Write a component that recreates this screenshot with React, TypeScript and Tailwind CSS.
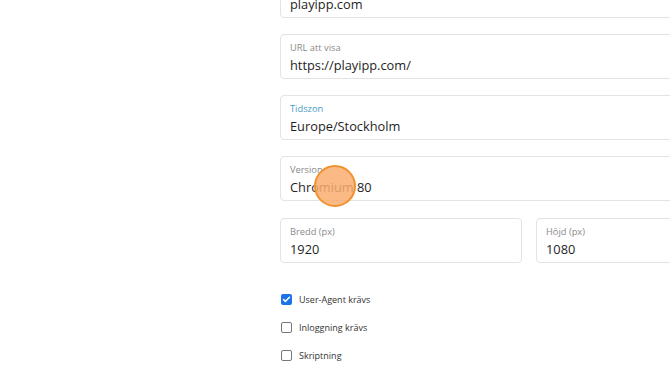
import { Check } from "lucide-react";

const fields = [
  { label: "", value: "playipp.com" },
  { label: "URL att visa", value: "https://playipp.com/" },
  { label: "Tidszon", value: "Europe/Stockholm", focused: true },
  { label: "Version", value: "Chromium 80" },
];

const checks = [
  { label: "User-Agent krävs", checked: true },
  { label: "Inloggning krävs", checked: false },
  { label: "Skriptning", checked: false },
];

function Field({ label, value, focused, className = "" }: { label: string; value: string; focused?: boolean; className?: string }) {
  return (
    <div className={`rounded-[4px] border border-[#e3e3e3] bg-white px-[9px] pt-[6px] pb-[3px] ${className}`}>
      <div className={`text-[9.3px] leading-[14px] ${focused ? "text-[#4b9cc7]" : "text-[#8a8a8a]"}`}>{label || "\u00a0"}</div>
      <div className="text-[12.8px] leading-[20px] text-[#1e1e1e]">{value}</div>
    </div>
  );
}

export default function App() {
  return (
    <div className="relative h-[373px] w-[670px] overflow-hidden bg-white" style={{ fontFamily: '"Open Sans", sans-serif' }}>
      <div className="-mt-[27px] flex w-[440px] flex-col gap-[16px] pl-[280px] box-content">
        {fields.map((f) => (
          <Field key={f.value} label={f.label} value={f.value} focused={f.focused} className="w-[440px]" />
        ))}
        <div className="mt-[1px] flex gap-[14px]">
          <Field label="Bredd (px)" value="1920" className="w-[242px] shrink-0" />
          <Field label="Höjd (px)" value="1080" className="w-[200px] shrink-0" />
        </div>
        <div className="mt-[14px] flex flex-col gap-[15px] pl-[1px]">
          {checks.map((c) => (
            <div key={c.label} className="flex items-center gap-[7px]">
              {c.checked ? (
                <span className="flex h-[11px] w-[11px] items-center justify-center rounded-[2px] bg-[#1a73e8]">
                  <Check className="h-[9px] w-[9px] text-white" strokeWidth={4} />
                </span>
              ) : (
                <span className="h-[11px] w-[11px] rounded-[2px] border border-[#777] bg-white" />
              )}
              <span className="text-[9px] leading-[13px] text-[#333]">{c.label}</span>
            </div>
          ))}
        </div>
      </div>
      <div className="absolute left-[314px] top-[165px] h-[42px] w-[42px] rounded-full border-2 border-[#f0922f] bg-[#f9ad70]/85" />
    </div>
  );
}
